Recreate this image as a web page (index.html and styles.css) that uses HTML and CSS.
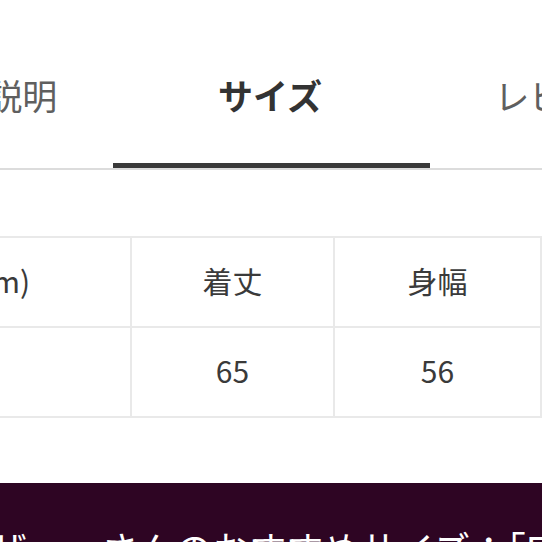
FILE: index.html
```html
<!DOCTYPE html>
<html lang="ja">
<head>
<meta charset="utf-8">
<title>サイズ</title>
<link rel="stylesheet" href="styles.css">
</head>
<body>
<div class="page">
  <nav class="tabs">
    <div class="tab">アイテム説明</div>
    <div class="tab tab-active">サイズ</div>
    <div class="tab">レビュー(0)</div>
  </nav>
  <div class="size-table">
    <div class="cell">サイズ(cm)</div>
    <div class="cell">着丈</div>
    <div class="cell">身幅</div>
    <div class="cell">フリー</div>
    <div class="cell">65</div>
    <div class="cell">56</div>
  </div>
  <div class="banner">
    <p class="banner-text">「ユーザー」さんのおすすめサイズ：「F」</p>
  </div>
</div>
</body>
</html>
```
FILE: styles.css
```css
html, body {
  margin: 0;
  padding: 0;
  background: #ffffff;
}
body {
  width: 542px;
  height: 542px;
  overflow: hidden;
  font-family: "Noto Sans CJK JP", "Noto Sans", sans-serif;
}
.page {
  width: 542px;
  overflow: hidden;
}
.tabs {
  display: flex;
  margin-left: -204px;
  border-bottom: 2px solid #dcdcdc;
}
.tab {
  position: relative;
  flex: none;
  width: 316px;
  padding: 78px 0 56px;
  font-size: 35px;
  line-height: 34px;
  color: #5f5f5f;
  text-align: center;
  white-space: nowrap;
}
.tab-active {
  color: #333333;
  font-weight: 700;
}
.tab-active::after {
  content: "";
  position: absolute;
  left: 1px;
  right: -2px;
  bottom: 0;
  height: 5px;
  background: #3a3a3a;
}
.size-table {
  display: grid;
  grid-template-columns: 352px 201px 205px;
  grid-auto-rows: 88px;
  gap: 2px;
  padding: 2px;
  margin: 66px 0 0 -224px;
  width: max-content;
  background: #e9e9e9;
}
.cell {
  display: flex;
  align-items: center;
  justify-content: center;
  padding-bottom: 4px;
  box-sizing: border-box;
  background: #ffffff;
  font-size: 30px;
  color: #3a3a3a;
  white-space: nowrap;
}
.banner {
  margin-top: 65px;
  height: 120px;
  background: #2e0523;
  padding-top: 47px;
  box-sizing: border-box;
}
.banner-text {
  margin: 0 0 0 -120px;
  font-size: 37px;
  line-height: 37px;
  color: #ffffff;
  white-space: nowrap;
}
```
